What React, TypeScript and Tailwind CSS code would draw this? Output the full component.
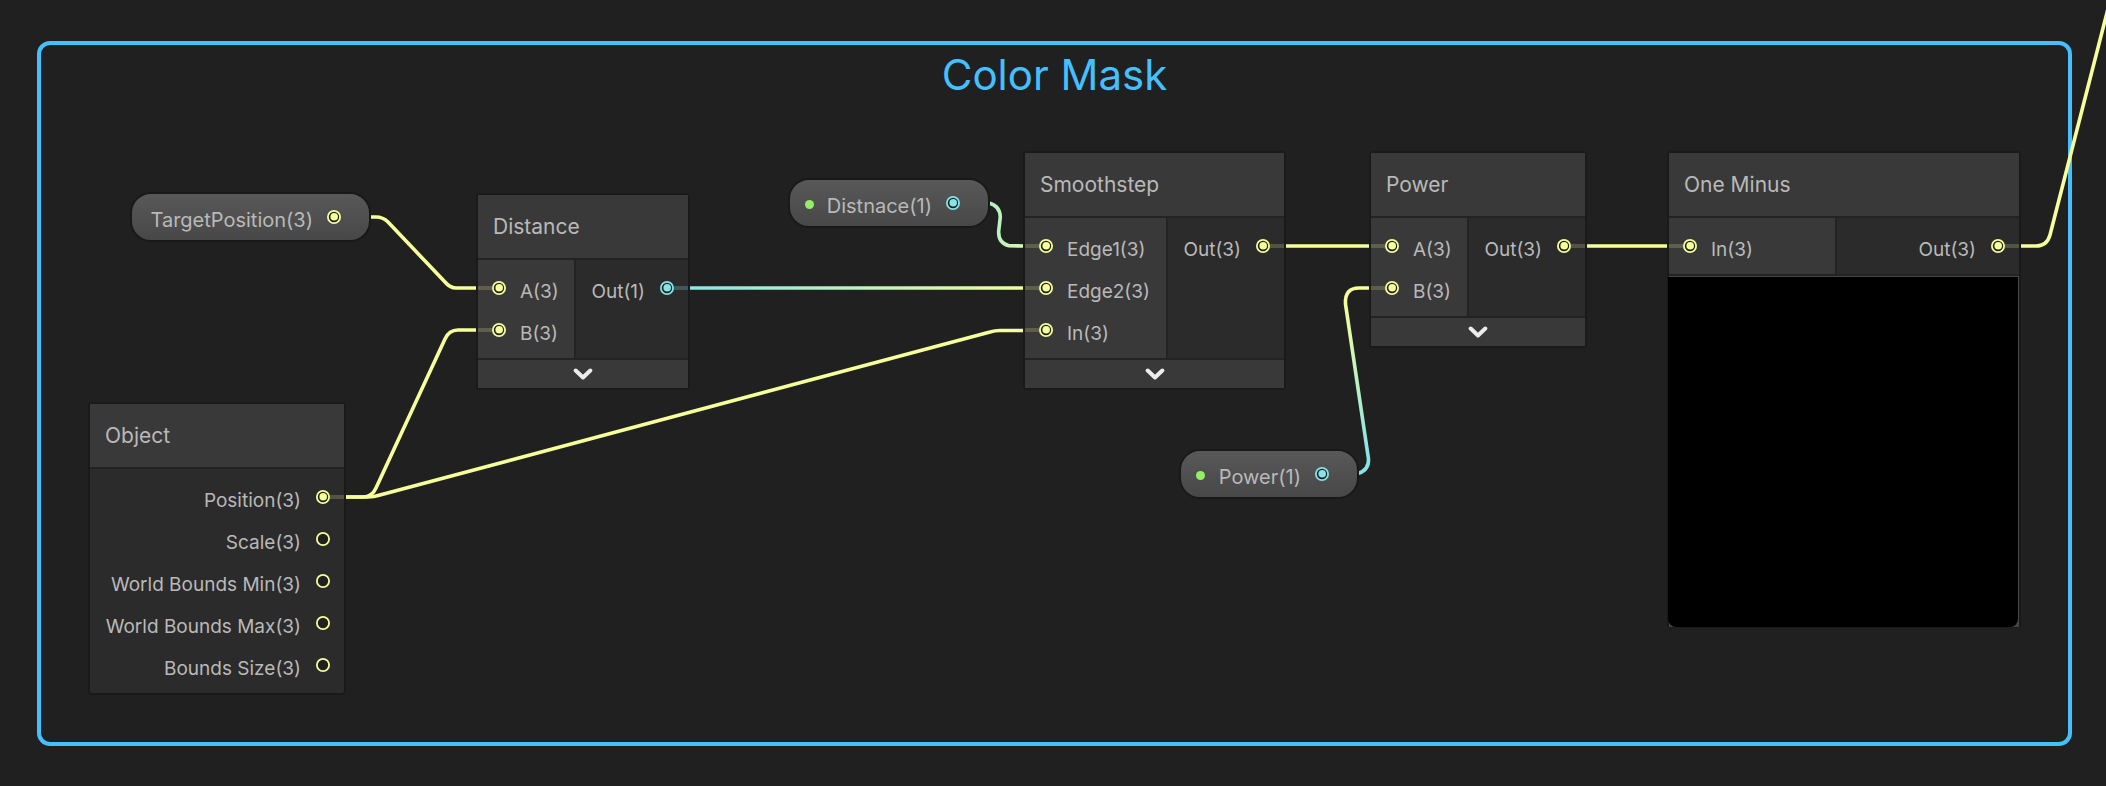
import React from "react";

type Tone = "yellow" | "cyan";

interface PortSpec {
  label: string;
  tone?: Tone;
  connected?: boolean;
}

interface NodeSpec {
  title: string;
  place: string;
  inputWidth?: string;
  inputs?: PortSpec[];
  outputs: PortSpec[];
  collapsible?: boolean;
  preview?: boolean;
}

interface PillSpec {
  label: string;
  place: string;
  tone: Tone;
  exposed?: boolean;
}

const YELLOW = "#f6ff9a";
const CYAN = "#84e4e7";

const nodes: NodeSpec[] = [
  {
    title: "Object",
    place: "left-[88px] top-[402px] w-[258px]",
    outputs: [
      { label: "Position(3)", connected: true },
      { label: "Scale(3)" },
      { label: "World Bounds Min(3)" },
      { label: "World Bounds Max(3)" },
      { label: "Bounds Size(3)" },
    ],
  },
  {
    title: "Distance",
    place: "left-[476px] top-[193px] w-[214px]",
    inputWidth: "w-[98px]",
    inputs: [
      { label: "A(3)", connected: true },
      { label: "B(3)", connected: true },
    ],
    outputs: [{ label: "Out(1)", tone: "cyan", connected: true }],
    collapsible: true,
  },
  {
    title: "Smoothstep",
    place: "left-[1023px] top-[151px] w-[263px]",
    inputWidth: "w-[143px]",
    inputs: [
      { label: "Edge1(3)", connected: true },
      { label: "Edge2(3)", connected: true },
      { label: "In(3)", connected: true },
    ],
    outputs: [{ label: "Out(3)", connected: true }],
    collapsible: true,
  },
  {
    title: "Power",
    place: "left-[1369px] top-[151px] w-[218px]",
    inputWidth: "w-[98px]",
    inputs: [
      { label: "A(3)", connected: true },
      { label: "B(3)", connected: true },
    ],
    outputs: [{ label: "Out(3)", connected: true }],
    collapsible: true,
  },
  {
    title: "One Minus",
    place: "left-[1667px] top-[151px] w-[354px]",
    inputWidth: "w-[168px]",
    inputs: [{ label: "In(3)", connected: true }],
    outputs: [{ label: "Out(3)", connected: true }],
    preview: true,
  },
];

const pills: PillSpec[] = [
  { label: "TargetPosition(3)", place: "left-[130px] top-[192px] w-[241px]", tone: "yellow" },
  { label: "Distnace(1)", place: "left-[788px] top-[178px] w-[202px]", tone: "cyan", exposed: true },
  { label: "Power(1)", place: "left-[1179px] top-[449px] w-[180px]", tone: "cyan", exposed: true },
];

function Socket({ tone = "yellow", connected }: { tone?: Tone; connected?: boolean }) {
  const color = tone === "cyan" ? CYAN : YELLOW;
  return (
    <svg className="size-3.5 shrink-0" viewBox="0 0 14 14" aria-hidden="true">
      <circle cx="7" cy="7" r="6.1" fill="#202020" stroke={color} strokeWidth="1.8" />
      {connected && <circle cx="7.2" cy="6.8" r="3.8" fill={color} />}
    </svg>
  );
}

function Stub({ tone = "yellow", connected }: { tone?: Tone; connected?: boolean }) {
  const fill = !connected ? "" : tone === "cyan" ? "bg-[#84e4e7]/25" : "bg-[#f6ff9a]/20";
  return <span className={`h-1 w-3.5 shrink-0 ${fill}`} />;
}

function InputPort({ label, tone, connected }: PortSpec) {
  return (
    <li className="flex h-[42px] items-center">
      <Stub tone={tone} connected={connected} />
      <Socket tone={tone} connected={connected} />
      <span className="pt-2 pl-3.5">{label}</span>
    </li>
  );
}

function OutputPort({ label, tone, connected }: PortSpec) {
  return (
    <li className="flex h-[42px] items-center justify-end">
      <span className="pt-2 pr-[15px]">{label}</span>
      <Socket tone={tone} connected={connected} />
      <Stub tone={tone} connected={connected} />
    </li>
  );
}

function GraphNode({ title, place, inputWidth, inputs, outputs, collapsible, preview }: NodeSpec) {
  return (
    <section className={`absolute rounded-sm border-2 border-[#1a1a1a] bg-[#2b2b2b] ${place}`}>
      <h3 className="flex h-[65px] items-center border-b-2 border-[#232323] bg-[#393939] pl-[15px] text-[21px] leading-7">
        {title}
      </h3>
      <div className="flex text-[19px] leading-6 whitespace-nowrap">
        {inputs && (
          <ul className={`shrink-0 border-r-2 border-[#232323] bg-[#393939] py-[7px] ${inputWidth}`}>
            {inputs.map((port) => (
              <InputPort key={port.label} {...port} />
            ))}
          </ul>
        )}
        <ul className="flex-1 py-[7px]">
          {outputs.map((port) => (
            <OutputPort key={port.label} {...port} />
          ))}
        </ul>
      </div>
      {collapsible && (
        <button
          type="button"
          aria-label={`Collapse ${title}`}
          className="flex h-[30px] w-full items-center justify-center border-t-2 border-[#232323] bg-[#393939]"
        >
          <svg className="h-3 w-5" viewBox="0 0 20 12" fill="none" aria-hidden="true">
            <path
              d="M2.700 2.500 L10 9.500 L17.300 2.500"
              stroke="#ececec"
              strokeWidth="4"
              strokeLinecap="round"
              strokeLinejoin="round"
            />
          </svg>
        </button>
      )}
      {preview && (
        <div className="border-t-2 border-[#232323]">
          <div className="bg-[#464646] pt-px">
            <div className="mr-px -mb-px -ml-px aspect-square rounded-b-lg bg-black" />
          </div>
        </div>
      )}
    </section>
  );
}

function PropertyPill({ label, place, tone, exposed }: PillSpec) {
  return (
    <div
      className={`absolute flex h-[50px] items-center justify-end rounded-[21px] border-2 border-[#191919] bg-linear-to-b from-[#595959] to-[#474747] bg-origin-border pr-7 text-xl leading-6 whitespace-nowrap ${place}`}
    >
      {exposed && <span className="mt-0.5 mr-auto ml-[15px] size-[9px] rounded-full bg-[#95ee63]" />}
      <span className="pt-1.5 pr-3.5">{label}</span>
      <Socket tone={tone} connected />
    </div>
  );
}

function Wires() {
  return (
    <svg
      className="pointer-events-none absolute top-0 left-0 h-[786px] w-[2130px]"
      viewBox="0 0 2130 786"
      fill="none"
      stroke={YELLOW}
      strokeWidth="3.6"
      aria-hidden="true"
    >
      <defs>
        <linearGradient id="distance-edge2" gradientUnits="userSpaceOnUse" x1="667" y1="0" x2="1046" y2="0">
          <stop stopColor={CYAN} />
          <stop offset="1" stopColor={YELLOW} />
        </linearGradient>
        <linearGradient id="property-edge1" gradientUnits="userSpaceOnUse" x1="952" y1="0" x2="1046" y2="0">
          <stop stopColor={CYAN} />
          <stop offset="1" stopColor={YELLOW} />
        </linearGradient>
        <linearGradient id="property-power" gradientUnits="userSpaceOnUse" x1="0" y1="462" x2="0" y2="300">
          <stop stopColor={CYAN} />
          <stop offset="1" stopColor={YELLOW} />
        </linearGradient>
      </defs>
      <path d="M370 217 H376 Q383 217 388 222 L445 282 Q450 288 456 288 H477" />
      <path d="M345 497 H363 Q372 497 376 488 L445 339 Q449 330 458 330 H477" />
      <path d="M345 497 H368 Q374 497 380 495 L990 332 Q995 330.500 1000 330.500 H1024" />
      <path d="M689 288 L1024 288.01" stroke="url(#distance-edge2)" />
      <path
        d="M989 203 Q1000 206 1000.300 217 L998.700 231 Q998 243 1009 245.800 L1024 246"
        stroke="url(#property-edge1)"
      />
      <path d="M1285 246 H1370" />
      <path
        d="M1358 473.500 Q1369 470 1368.500 459 L1345.500 304 Q1344.500 288 1359 288 H1370"
        stroke="url(#property-power)"
      />
      <path d="M1586 246 H1668" />
      <path d="M2020 246 H2036 Q2047 246 2050 235 L2112 -7" />
    </svg>
  );
}

export default function App() {
  return (
    <main className="relative flex min-h-screen flex-col overflow-hidden bg-[#202020] pt-[41px] pr-[34px] pb-10 pl-[37px] font-['Inter',sans-serif] text-[#b9b9b9]">
      <section className="min-h-[705px] flex-1 rounded-[13px] border-4 border-[#43c0ff]">
        <h2 className="text-center text-[42px] leading-[60px] text-[#43c0ff]">Color Mask</h2>
      </section>
      <Wires />
      {pills.map((pill) => (
        <PropertyPill key={pill.label} {...pill} />
      ))}
      {nodes.map((node) => (
        <GraphNode key={node.title} {...node} />
      ))}
    </main>
  );
}
